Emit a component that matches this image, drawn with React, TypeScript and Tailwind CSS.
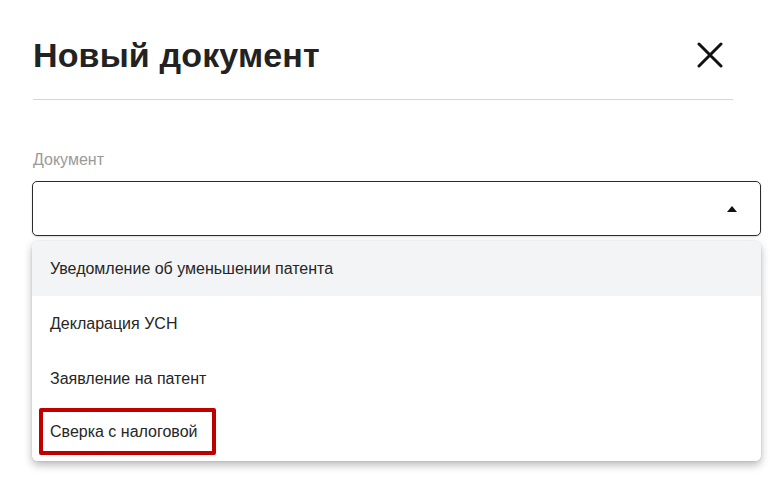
import React, { useState } from 'react';

const OPTIONS = [
  'Уведомление об уменьшении патента',
  'Декларация УСН',
  'Заявление на патент',
  'Сверка с налоговой',
];

const App: React.FC = () => {
  const [hovered] = useState(0);
  const marked = 3;

  return (
    <div className="min-h-screen w-full bg-white font-['Liberation_Sans',Arial,sans-serif] text-[#1f1f1f]">
      <div className="pl-[33px] pr-[37px] pt-[33px]">
        {/* Header */}
        <div className="flex items-center justify-between h-[44px]">
          <h1 className="text-[34px] font-bold leading-none tracking-[0.15px] text-[#222]">
            Новый документ
          </h1>
          <button className="mr-[9px] flex h-[28px] w-[28px] items-center justify-center" aria-label="Закрыть">
            <svg width="26" height="26" viewBox="0 0 26 26" fill="none">
              <path d="M2 2L24 24M24 2L2 24" stroke="#111" strokeWidth="3" strokeLinecap="round" />
            </svg>
          </button>
        </div>
        <div className="mt-[22px] h-px bg-[#d6d6d6]" />
      </div>

      {/* Field */}
      <div className="pl-[32px] pr-[9px] pt-[51px]">
        <label className="block pl-px text-[16px] leading-[18px] text-[#9a9a9a]">Документ</label>
        <div className="mt-[12px] flex h-[55px] items-center justify-end rounded-[5px] border border-[#2b2b2b] bg-white pr-[23px] shadow-[0_1px_2px_rgba(0,0,0,0.15)]">
          <svg width="10" height="6" viewBox="0 0 10 6">
            <path d="M0 6L5 0L10 6Z" fill="#111" />
          </svg>
        </div>

        {/* Dropdown */}
        <ul className="mt-[5px] overflow-hidden rounded-[6px] bg-white shadow-[0_4px_8px_rgba(0,0,0,0.28),0_0_2px_rgba(0,0,0,0.12)]">
          {OPTIONS.map((opt, i) => (
            <li
              key={opt}
              className={`flex h-[55px] text-[16px] text-[#262626] ${
                i === hovered ? 'bg-[#f3f4f6]' : 'bg-white'
              } ${i === marked ? 'items-start' : 'items-center'}`}
            >
              {i === marked ? (
                <span className="ml-[7px] mt-[2px] flex h-[47px] w-[177px] items-center rounded-[2px] border-[4px] border-[#c00000] pl-[7px]">
                  {opt}
                </span>
              ) : (
                <span className="pl-[18px]">{opt}</span>
              )}
            </li>
          ))}
        </ul>
      </div>
    </div>
  );
};

export default App;
